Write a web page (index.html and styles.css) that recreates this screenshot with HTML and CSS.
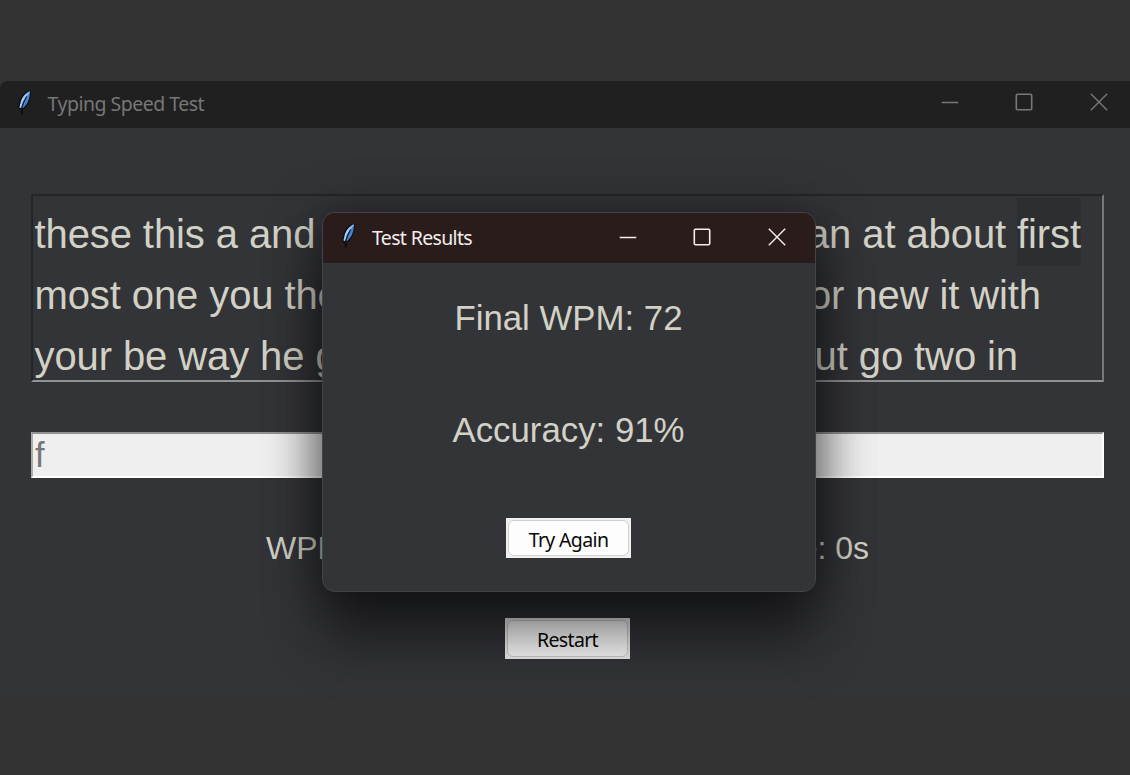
FILE: index.html
```
<!DOCTYPE html>
<html lang="en">
<head>
<meta charset="utf-8">
<title>Typing Speed Test</title>
<link rel="stylesheet" href="styles.css">
</head>
<body>
<svg class="defs" aria-hidden="true">
  <symbol id="feather" viewBox="0 0 14 26">
    <path d="M13.6 .4 C8.8 1.2 4.9 4.8 2.6 10.5 L1 17.8 L3.6 20 L4.2 25 L5.6 24.5 L5.9 19.6 C10 17.5 13 11 13.8 4 Z" fill="#0b0c0f"/>
    <path d="M12.6 1.6 C8.8 3 5.8 6.3 4 10.8 L2.4 17.6 L4.3 18.2 L6.3 12 L10 6 Z" fill="#a4cbf0"/>
    <path d="M12.9 1.6 C13 8 11 14 6.2 18 L5 17.8 L7 12 L10 5.6 Z" fill="#4283d2"/>
    <path d="M9.6 6.6 C7.3 10 5.8 13.5 4.4 19" fill="none" stroke="#17243a" stroke-width="1.3"/>
    <path d="M12.6 1.6 L9.6 5.4" fill="none" stroke="#8bbcf0" stroke-width="1.3"/>
  </symbol>
  <symbol id="minimize" viewBox="0 0 18 18"><path d="M.7 9.5H17.3" fill="none" stroke="currentColor" stroke-width="1.6"/></symbol>
  <symbol id="maximize" viewBox="0 0 18 18"><rect x="1.3" y="1.3" width="15.4" height="15.4" rx="1.2" fill="none" stroke="currentColor" stroke-width="1.6"/></symbol>
  <symbol id="close" viewBox="0 0 18 18"><path d="M.8 .8L17.2 17.2M17.2 .8L.8 17.2" fill="none" stroke="currentColor" stroke-width="1.4"/></symbol>
</svg>
<main class="window">
  <header class="titlebar">
    <svg class="feather"><use href="#feather"/></svg>
    <span class="title">Typing Speed Test</span>
    <div class="controls">
      <svg><use href="#minimize"/></svg><svg><use href="#maximize"/></svg><svg><use href="#close"/></svg>
    </div>
  </header>
  <div class="content">
    <div class="passage">
      <div class="line line-1"><span>these this a and</span><span>can at about <mark>first</mark></span></div>
      <div class="line line-2"><span>most one you the</span><span>for new it with</span></div>
      <div class="line line-3"><span>your be way he g</span><span>but go two in</span></div>
    </div>
    <div class="entry">f</div>
    <div class="stats"><span>WPM: 72</span><span>Time: 0s</span></div>
    <button class="button restart"><span>Restart</span></button>
  </div>
</main>
<section class="dialog">
  <header class="titlebar">
    <svg class="feather"><use href="#feather"/></svg>
    <span class="title">Test Results</span>
    <div class="controls">
      <svg><use href="#minimize"/></svg><svg><use href="#maximize"/></svg><svg><use href="#close"/></svg>
    </div>
  </header>
  <div class="results">
    <p class="wpm">Final WPM: 72</p>
    <p class="accuracy">Accuracy: 91%</p>
    <button class="button again"><span>Try Again</span></button>
  </div>
</section>
</body>
</html>
```
FILE: styles.css
```
* { box-sizing: border-box; }
body {
  margin: 0;
  width: 1130px;
  height: 775px;
  overflow: hidden;
  padding-top: 81px;
  background: #333;
  color: #d2d1c6;
  font-family: "Liberation Sans", Arial, sans-serif;
}
.defs { position: absolute; width: 0; height: 0; }
.window {
  height: 613px;
  background: #333438;
  border-radius: 8px 0 0 0;
  overflow: hidden;
}
.titlebar {
  display: flex;
  align-items: center;
  height: 47px;
  padding: 0 22px 0 17px;
  background: #202020;
  color: #777;
  font-family: "Noto Sans", "Open Sans", sans-serif;
  font-size: 19.5px;
}
.feather { width: 14px; height: 26px; margin-top: -4px; }
.title { margin: -2px 0 0 16.5px; line-height: 26px; white-space: nowrap; letter-spacing: -.5px; }
.controls { display: flex; gap: 57.5px; margin-left: auto; margin-top: -5px; }
.controls svg { width: 18px; height: 18px; }
.controls svg:nth-child(2) { margin-left: -1.5px; }
.content {
  display: flex;
  flex-direction: column;
  padding: 66px 26px 0 31px;
}
.passage {
  height: 188px;
  padding: 8px 0 0 1.5px;
  border: 2px solid;
  border-color: #242529 #77787a #919292 #242529;
  font-size: 40px;
  line-height: 60.9px;
  overflow: hidden;
}
.line { display: flex; justify-content: space-between; white-space: pre; height: 60.9px; letter-spacing: -.1px; }
.line-1 { padding-right: 21px; }
.line-2 { padding-right: 61px; }
.line-3 { padding-right: 84px; }
mark { padding: 14px 0 10px; background: #2d2e31; color: inherit; }
.entry {
  height: 46px;
  margin-top: 50px;
  padding-left: 2px;
  border: 2px solid;
  border-color: #929292 #fff #fff #aaa;
  background: #efefef;
  color: #77777b;
  font-size: 34.5px;
  line-height: 42px;
}
.stats {
  display: flex;
  justify-content: space-between;
  margin-top: 50px;
  padding: 0 235px;
  font-size: 32px;
  line-height: 40px;
}
.button {
  align-self: center;
  width: 125px;
  height: 40px;
  padding: 2px;
  border: 0;
  background: #f0f0f0;
  color: #080808;
  font: 19.5px/37px "Noto Sans", "Open Sans", sans-serif;
  letter-spacing: -.65px;
}
.button span {
  display: block;
  height: 100%;
  border: 1.5px solid #cfcfcf;
  border-radius: 6px;
  background: #fdfdfd;
}
.restart { height: 41px; margin-top: 50px; }
.dialog {
  position: absolute;
  left: 322px;
  top: 212px;
  width: 494px;
  height: 380px;
  border: 1.5px solid #434447;
  border-radius: 13px;
  background: #333438;
  overflow: hidden;
  box-shadow: 0 50px 56px rgba(0, 0, 0, .42), 0 6px 52px rgba(0, 0, 0, .52);
}
.dialog .titlebar { height: 50px; padding: 0 29px 0 18px; background: #2a1c1b; color: #f2eeee; }
.dialog .title { margin-top: 0; margin-left: 17px; letter-spacing: -.65px; }
.dialog .controls { margin-top: -3px; }
.results { display: flex; flex-direction: column; padding: 34px 1px 0 0; text-align: center; }
.results p { margin: 0; font-size: 34.8px; line-height: 42px; }
.results .accuracy { margin-top: 70px; }
.again { margin-top: 67px; }
```
